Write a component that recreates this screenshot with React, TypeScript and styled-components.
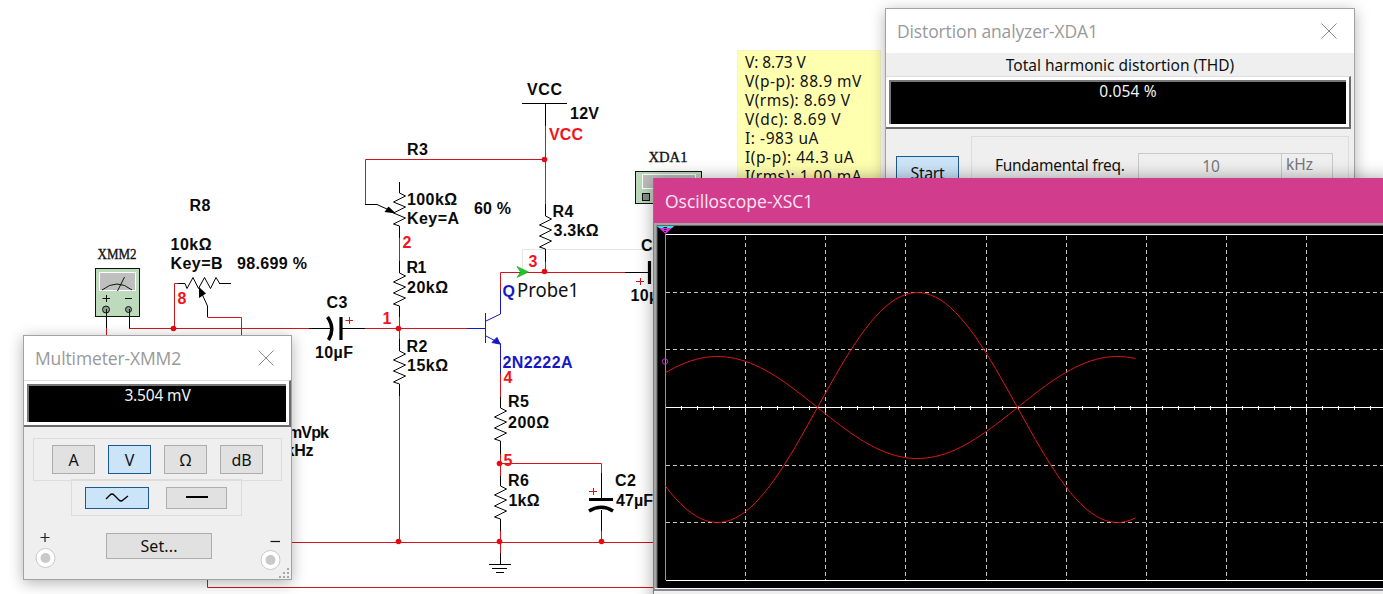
import React from "react";
import styled, { createGlobalStyle } from "styled-components";

const GlobalStyle = createGlobalStyle`
  * { box-sizing: border-box; }
  body { margin: 0; background: #fff; overflow: hidden; }
`;

const ui = `"Noto Sans", "Open Sans", sans-serif`;
const title = `"Open Sans", "Noto Sans", sans-serif`;

const Desktop = styled.main`
  position: relative;
  width: 1383px;
  height: 594px;
  overflow: hidden;
  background: #fff;
  font-family: ${ui};
  color: #111;
`;

const Sheet = styled.svg`
  display: block;
  width: 1383px;
  height: 594px;
`;

/* ---------- schematic ---------- */

const RED = "#d2141c";
const BLUE = "#1717c9";
const NET = "#f0141c";

type P = { d: string; c?: string; w?: number };
const Line = ({ d, c = "#000", w = 1 }: P) => (
  <path d={d} stroke={c} strokeWidth={w} fill="none" />
);

const Tag = styled.text<{ $c?: string }>`
  font: bold 16px "Liberation Sans", sans-serif;
  fill: ${(p) => p.$c ?? "#0a0a0a"};
`;
const InstrumentTag = styled.text`
  font: 15px "Liberation Serif", serif;
  fill: #111;
  stroke: #111;
  stroke-width: 0.35px;
`;
const ProbeTag = styled.text`
  font: 19.5px ${ui};
  fill: #111;
`;

const zig = (x: number, y: number) =>
  `M${x} ${y}l6 3l-12 6l12 5l-12 6l12 5l-12 6l6 2`;

const tags: [string, number, number, number, string?][] = [
  ["VCC", 527, 95, 35],
  ["12V", 570, 119, 29],
  ["VCC", 549, 140, 34, NET],
  ["R3", 407, 155, 21],
  ["100kΩ", 407, 205, 50],
  ["Key=A", 407, 224, 52],
  ["60 %", 474, 214, 37],
  ["2", 402.5, 247.5, 9, NET],
  ["R1", 406.5, 273, 20],
  ["20kΩ", 407, 292.5, 41],
  ["1", 382.5, 324, 9, NET],
  ["R2", 406.5, 351.5, 21],
  ["15kΩ", 407, 371, 41],
  ["C3", 326.5, 307.5, 21],
  ["10µF", 315, 358, 38],
  ["R4", 552.5, 216.5, 21],
  ["3.3kΩ", 553.5, 236, 45],
  ["3", 528.5, 267, 9, NET],
  ["Q", 502.5, 297, 12, BLUE],
  ["2N2222A", 502.5, 367.5, 70, BLUE],
  ["4", 503.5, 383, 9, NET],
  ["R5", 508, 407, 21],
  ["200Ω", 508, 427.5, 41],
  ["5", 503.5, 466, 9, NET],
  ["R6", 508, 486, 21],
  ["1kΩ", 508.5, 506, 31],
  ["C2", 615, 486, 21],
  ["47µF", 616, 506, 37],
  ["R8", 189.5, 210.5, 21],
  ["10kΩ", 170.5, 250, 41],
  ["Key=B", 170.5, 269, 52],
  ["98.699 %", 237, 269, 70],
  ["8", 177.5, 303.5, 9, NET],
  ["C", 641, 250.5, 12],
  ["10µF", 630.5, 301, 38],
  ["mVpk", 288, 438, 41],
  ["kHz", 285.5, 456, 28],
];

const dots = [
  [173.5, 328.5],
  [398.5, 328.5],
  [544.5, 159.5],
  [544.5, 271.5],
  [499.5, 463.5],
  [499.5, 541.5],
  [398.5, 541.5],
  [601.5, 541.5],
];

const Schematic = () => (
  <Sheet viewBox="0 0 1383 594">
    <Line c="#e6e6e6" d="M522.5 270V249.5H653" />
    <g>
      <Line
        c={RED}
        d="M129.5 328.5H309M365 328.5H467M174.5 328V283.5H178M207.5 317.5H241.5V340M106.5 328V340M207.5 560V587.5H660M280 542.5H660M365.5 204V159.5H545M545.5 126V204M399.5 238V261M399.5 316V340M399.5 396V542M500.5 290V272.5H625M545.5 262V272M500.5 374V397M500.5 454V476M500.5 463.5H601.5V473M500.5 531V553M601.5 531V542"
      />
      <Line
        c={BLUE}
        d="M467 328.5H485M485.5 313V343M500.5 290V314L486 321M486 336L500.5 343.5V374"
      />
      <path d="M492 342.5L497 337.5L500 344Z" fill={BLUE} stroke={BLUE} />
      <Line d="M522 103.5H567M545.5 103V126M545.5 204V216M545.5 249V262M625 272.5H649" />
      <Line d="M399.5 182V193M399.5 226V238M399.5 261V273M399.5 306V317M399.5 339V351M399.5 384V396" />
      <Line d="M500.5 397V408M500.5 441V454M500.5 476V486M500.5 519V531M500.5 553V564M489 564.5H511M492 568.5H507M496 572.5H504M601.5 473V499M601.5 510V531" />
      <Line d="M309 328.5H331M341 328.5H365M365 204.5H377L388 209.5M178 283.5H185M219 283.5H231M207.5 317V306L202 294M106.5 309V328M129.5 309V328.5" />
      {[
        [399.5, 193],
        [399.5, 273],
        [399.5, 351],
        [545.5, 216],
        [500.5, 408],
        [500.5, 486],
      ].map(([x, y]) => (
        <Line key={`${x}-${y}`} d={zig(x, y)} />
      ))}
      <Line d="M185 283.5l2 5l6 -11l5.500 11l6 -11l6 11l5.500 -11l4 6.500" />
      <path d="M396 213.500L384.500 212L388.500 206.500Z" />
      <path d="M199 287L206 293.500L199 298Z" />
      <Line w={3.2} d="M341 317V340M589 499.500H613M649.500 261V284" />
      <Line w={3.5} d="M327.500 317Q335.500 328.500 328.500 340M589 511Q601.500 503.500 613 511" />
      <Line
        c={RED}
        d="M345.500 320.500H353M349.500 317V324M589 491.500H597M593.500 488V495M636 281.500H644M640.500 278V285"
      />
      {dots.map(([x, y]) => (
        <circle key={`${x}-${y}`} cx={x} cy={y} r="2.800" fill="#e60a14" />
      ))}
      <path d="M517 266.500L528.500 272L517 277.500L520.500 272Z" fill="#12cc22" stroke="#1f9a2a" strokeWidth=".6" />
    </g>
    <g stroke="#0d150d">
      <rect x="95.500" y="268.500" width="44" height="48" fill="#bddabd" />
      <rect x="99.500" y="272.500" width="36" height="18" fill="#bfbfbf" stroke="#fff" />
      <path d="M102 290Q117 278 132 290M117.500 291L124.500 277M102.500 298.500H110M106.500 295V302M125 298.500H132" fill="none" />
      <circle cx="106" cy="309.500" r="3.500" fill="#8d9b92" />
      <circle cx="128.500" cy="309.500" r="3" fill="#8d9b92" />
      <path d="M106.500 309V317M129.500 309V317" />
      <rect x="635.500" y="171.500" width="66" height="32" fill="#bddabd" />
      <rect x="642.500" y="174.500" width="53" height="14" fill="#bfbfbf" stroke="#fff" />
      <rect x="642.500" y="193.500" width="7" height="7" fill="#8c8c8c" />
    </g>
    {tags.map(([t, x, y, w, c]) => (
      <Tag key={`${t}-${x}-${y}`} x={x} y={y} textLength={w} $c={c}>
        {t}
      </Tag>
    ))}
    <InstrumentTag x="97.500" y="259" textLength="39" lengthAdjust="spacingAndGlyphs">XMM2</InstrumentTag>
    <InstrumentTag x="648.500" y="161.500" textLength="39" lengthAdjust="spacingAndGlyphs">XDA1</InstrumentTag>
    <ProbeTag x="517" y="296.500" textLength="62" lengthAdjust="spacingAndGlyphs">Probe1</ProbeTag>
  </Sheet>
);

/* ---------- shared window parts ---------- */

const Window = styled.section<{ $x: number; $y: number; $w: number; $h: number; $z: number }>`
  position: absolute;
  left: ${(p) => p.$x}px;
  top: ${(p) => p.$y}px;
  width: ${(p) => p.$w}px;
  height: ${(p) => p.$h}px;
  z-index: ${(p) => p.$z};
  display: flex;
  flex-direction: column;
  background: #efefef;
  border: 1px solid #a2a2a2;
  box-shadow: 0 3px 14px rgba(0, 0, 0, 0.3);
`;

const TitleBar = styled.header<{ $h: number }>`
  display: flex;
  flex: none;
  align-items: center;
  justify-content: space-between;
  height: ${(p) => p.$h}px;
  padding: 0 17px 0 11px;
  background: #fff;
  color: #999;
`;

const Title = styled.h1<{ $ls?: number }>`
  margin: 0;
  font: 400 17.5px/24px ${title};
  letter-spacing: ${(p) => p.$ls ?? 0}px;
  white-space: nowrap;
`;

const CloseIcon = () => (
  <svg width="16" height="16" viewBox="0 0 16 16" stroke="#8a8a8a" fill="none">
    <path d="M.5 .5L15.500 15.500M15.500 .5L.5 15.500" />
  </svg>
);

const Readout = styled.div<{ $h: number; $mr?: number; $ls?: number; $pl?: number }>`
  flex: none;
  height: ${(p) => p.$h}px;
  margin-right: ${(p) => p.$mr ?? 0}px;
  padding: 3px;
  border-top: 1px solid #ddd;
  border-right: 2px solid #6a6a6a;
  border-bottom: 2px solid #6a6a6a;
  background: #fff;

  > output {
    display: block;
    height: 100%;
    padding-left: ${(p) => p.$pl ?? 0}px;
    border-top: 2px solid #777;
    border-left: 2px solid #777;
    background: #000;
    color: #f4f4f4;
    font: 15.500px/19px ${ui};
    letter-spacing: ${(p) => p.$ls ?? 0}px;
    text-align: center;
  }
`;

const Key = styled.button<{ $w: number; $h: number; $on?: boolean; $ls?: number }>`
  display: flex;
  flex: none;
  align-items: center;
  justify-content: center;
  width: ${(p) => p.$w}px;
  height: ${(p) => p.$h}px;
  padding: 0;
  border: 1px solid ${(p) => (p.$on ? "#1d598f" : "#adadad")};
  background: ${(p) => (p.$on ? "#cbe4f8" : "#e1e1e1")};
  color: #111;
  font: 16px/22px ${ui};
  letter-spacing: ${(p) => p.$ls ?? 0}px;
`;

/* ---------- multimeter ---------- */

const ModeGroup = styled.div`
  display: flex;
  gap: 13px;
  width: 249px;
  height: 43px;
  margin: 11px 0 0 9px;
  padding: 6px 0 0 18px;
  border: 1px solid #dcdcdc;
`;

const CouplingGroup = styled.div`
  display: flex;
  gap: 17px;
  width: 171px;
  height: 37px;
  margin: -2px 0 0 47px;
  padding: 7px 0 0 13px;
  border: 1px solid #dcdcdc;
`;

const Terminals = styled.div`
  display: flex;
  align-items: flex-start;
  margin-top: 15px;
  padding: 0 9px 0 11px;
`;

const Terminal = styled.div<{ $mt: number }>`
  display: flex;
  margin-top: ${(p) => p.$mt}px;
`;

const KeySlot = styled.div`
  margin: 0 auto 0 49px;
  padding-top: 2px;
`;

const Grip = styled.svg`
  position: absolute;
  right: 0;
  bottom: 0;
`;

const Jack = ({ minus }: { minus?: boolean }) => (
  <svg width="22" height="38" viewBox="0 0 22 38">
    {minus ? (
      <path d="M10.500 6.500H20" stroke="#111" strokeWidth="1.200" />
    ) : (
      <path d="M5.500 6.500H14.500M10 2V11" stroke="#222" strokeWidth="1.200" />
    )}
    <circle cx="10.500" cy={minus ? 25 : 27} r="9.500" fill="#fff" stroke="#c8c8c8" />
    <circle cx="10.500" cy={minus ? 25 : 27} r="5" fill="#c9c9c9" />
  </svg>
);

const Multimeter = () => (
  <Window $x={23} $y={335} $w={269} $h={245} $z={2}>
    <TitleBar $h={44}>
      <Title $ls={-0.13}>Multimeter-XMM2</Title>
      <CloseIcon />
    </TitleBar>
    <Readout $h={47} $ls={-0.15}>
      <output>3.504 mV</output>
    </Readout>
    <ModeGroup>
      {["A", "V", "Ω", "dB"].map((m) => (
        <Key key={m} $w={43} $h={29} $on={m === "V"}>
          {m}
        </Key>
      ))}
    </ModeGroup>
    <CouplingGroup>
      <Key $w={64} $h={22} $on aria-label="AC">
        <svg width="24" height="12" viewBox="0 0 24 12" fill="none" stroke="#000" strokeWidth="1.300">
          <path d="M1 7L5 3Q7 1 9 3L14 8Q16 10 18 8L23 4" />
        </svg>
      </Key>
      <Key $w={61} $h={22} aria-label="DC">
        <svg width="22" height="12" viewBox="0 0 22 12" stroke="#000" strokeWidth="2">
          <path d="M0 5H22" />
        </svg>
      </Key>
    </CouplingGroup>
    <Terminals>
      <Terminal $mt={0}>
        <Jack />
      </Terminal>
      <KeySlot>
        <Key $w={106} $h={26} $ls={0.1}>
          Set...
        </Key>
      </KeySlot>
      <Terminal $mt={4}>
        <Jack minus />
      </Terminal>
    </Terminals>
    <Grip width="12" height="12" viewBox="0 0 12 12" fill="#a8a8a8">
      <path d="M8 1h2v2h-2zM4 5h2v2h-2zM8 5h2v2h-2zM0 9h2v2h-2zM4 9h2v2h-2zM8 9h2v2h-2z" />
    </Grip>
  </Window>
);

/* ---------- probe note ---------- */

const Note = styled.aside`
  position: absolute;
  left: 737px;
  top: 50px;
  z-index: 1;
  width: 144px;
  height: 160px;
  padding: 2px 0 0 7px;
  background: #ffffb0;
  border: 1px solid #f6f6c8;
  font: 15.500px/19px ${ui};
  white-space: nowrap;
`;

const Reading = styled.div<{ $ls: number }>`
  height: 19px;
  letter-spacing: ${(p) => p.$ls}px;
`;

const readings: [string, number][] = [
  ["V: 8.73 V", -0.1],
  ["V(p-p): 88.9 mV", 0.5],
  ["V(rms): 8.69 V", 0.45],
  ["V(dc): 8.69 V", 0.65],
  ["I: -983 uA", 0.55],
  ["I(p-p): 44.3 uA", 0.55],
  ["I(rms): 1.00 mA", 0.45],
];

/* ---------- distortion analyzer ---------- */

const Caption = styled.div`
  flex: none;
  height: 23px;
  font: 15.500px/25px ${ui};
  text-align: center;
`;

const AnalyzerBody = styled.div`
  display: flex;
  align-items: flex-start;
  padding: 7px 5px 0 10px;
`;

const StartSlot = styled.div`
  width: 75px;
  padding-top: 20px;
`;

const Settings = styled.div`
  display: flex;
  align-items: flex-start;
  width: 378px;
  height: 120px;
  padding-top: 16px;
  border: 1px solid #dcdcdc;
`;

const SettingLabel = styled.label`
  width: 166px;
  padding-left: 23px;
  font: 15.500px/25px ${ui};
  letter-spacing: -0.28px;
  white-space: nowrap;
`;

const Value = styled.div<{ $w: number; $center?: boolean }>`
  width: ${(p) => p.$w}px;
  height: 34px;
  padding-left: ${(p) => (p.$center ? 2 : 4)}px;
  border: 1px solid #c9c9c9;
  border-left-width: ${(p) => (p.$center ? 1 : 0)}px;
  color: #777;
  font: 15.500px/${(p) => (p.$center ? 24 : 21)}px ${ui};
  text-align: ${(p) => (p.$center ? "center" : "left")};
`;

const Analyzer = () => (
  <Window $x={885} $y={8} $w={470} $h={260} $z={2}>
    <TitleBar $h={44}>
      <Title $ls={-0.13}>Distortion analyzer-XDA1</Title>
      <CloseIcon />
    </TitleBar>
    <Caption>Total harmonic distortion (THD)</Caption>
    <Readout $h={53} $mr={3} $ls={0.15} $pl={19}>
      <output>0.054 %</output>
    </Readout>
    <AnalyzerBody>
      <StartSlot>
        <Key $w={63} $h={34} $on $ls={-0.4}>
          Start
        </Key>
      </StartSlot>
      <Settings>
        <SettingLabel>Fundamental freq.</SettingLabel>
        <Value $w={144} $center>
          10
        </Value>
        <Value $w={51}>kHz</Value>
      </Settings>
    </AnalyzerBody>
  </Window>
);

/* ---------- oscilloscope ---------- */

const Scope = styled.section`
  position: absolute;
  left: 653px;
  top: 178px;
  z-index: 3;
  width: 740px;
  height: 430px;
  display: flex;
  flex-direction: column;
  border-left: 1px solid #d2508f;
  background: #efefef;
  box-shadow: 0 0 16px rgba(0, 0, 0, 0.35);
`;

const ScopeTitle = styled(TitleBar)`
  background: #d23c8c;
  color: #ffe6f3;
`;

const Screen = styled.svg`
  display: block;
  flex: none;
  width: 729px;
  height: 368px;
`;

/* a negative amplitude draws the inverted trace */
const wave = (amp: number) => {
  const pts: string[] = [];
  for (let x = 665.5; x <= 1135.5; x += 5) {
    pts.push(`${x} ${(407.5 - amp * Math.cos(((x - 717.5) * Math.PI) / 200)).toFixed(1)}`);
  }
  return "M" + pts.join("L");
};

const columns = [745.5, 825.5, 905.5, 986.5, 1066.5, 1146.5, 1226.5, 1306.5];
const ticks = Array.from({ length: 45 }, (_, i) => Math.round(665 + i * 16.03) + 0.5);

const Oscilloscope = () => (
  <Scope>
    <ScopeTitle $h={45}>
      <Title>Oscilloscope-XSC1</Title>
    </ScopeTitle>
    <Screen viewBox="654 223 729 368">
      <rect x="654" y="223" width="730" height="368" fill="#a5a5a5" />
      <path d="M654 590H1384" stroke="#8a8a94" strokeWidth="2" />
      <path d="M655 588.500H1384" stroke="#fff" />
      <rect x="657" y="226" width="730" height="362" fill="#000" />
      <path d="M657 588V225.500H1384" stroke="#666" fill="none" />
      <path
        d={columns.map((x) => `M${x} 236V580`).join("") + "M666 292.500H1384M666 349.500H1384M666 465.500H1384M666 522.500H1384"}
        stroke="#c4c4c4"
        strokeDasharray="4 3"
      />
      <path d="M666 234.500H1384M666 407.500H1384M666 580.500H1384" stroke="#fff" />
      <path d={ticks.map((x) => `M${x} 406V410`).join("")} stroke="#fff" />
      <path d={columns.map((x) => `M${x} 404V412`).join("")} stroke="#fff" />
      <path d="M665.500 234V580" stroke="#35d835" />
      <path d={wave(51)} stroke="#e01616" fill="none" />
      <path d={wave(-115)} stroke="#e01616" fill="none" />
      <circle cx="665" cy="361.500" r="2.700" stroke="#c030c0" fill="none" />
      <path d="M657 226H674L665.500 234Z" fill="#e22be2" />
      <path d="M657 226H674L672 228H659Z" fill="#35dff0" />
      <path d="M663.500 227.500H667M664 229.500H666.500M664 231.500H666" stroke="#111" />
    </Screen>
  </Scope>
);

export default function App() {
  return (
    <>
      <GlobalStyle />
      <Desktop>
        <Schematic />
        <Note>
          {readings.map(([text, ls]) => (
            <Reading key={text} $ls={ls}>
              {text}
            </Reading>
          ))}
        </Note>
        <Multimeter />
        <Analyzer />
        <Oscilloscope />
      </Desktop>
    </>
  );
}
